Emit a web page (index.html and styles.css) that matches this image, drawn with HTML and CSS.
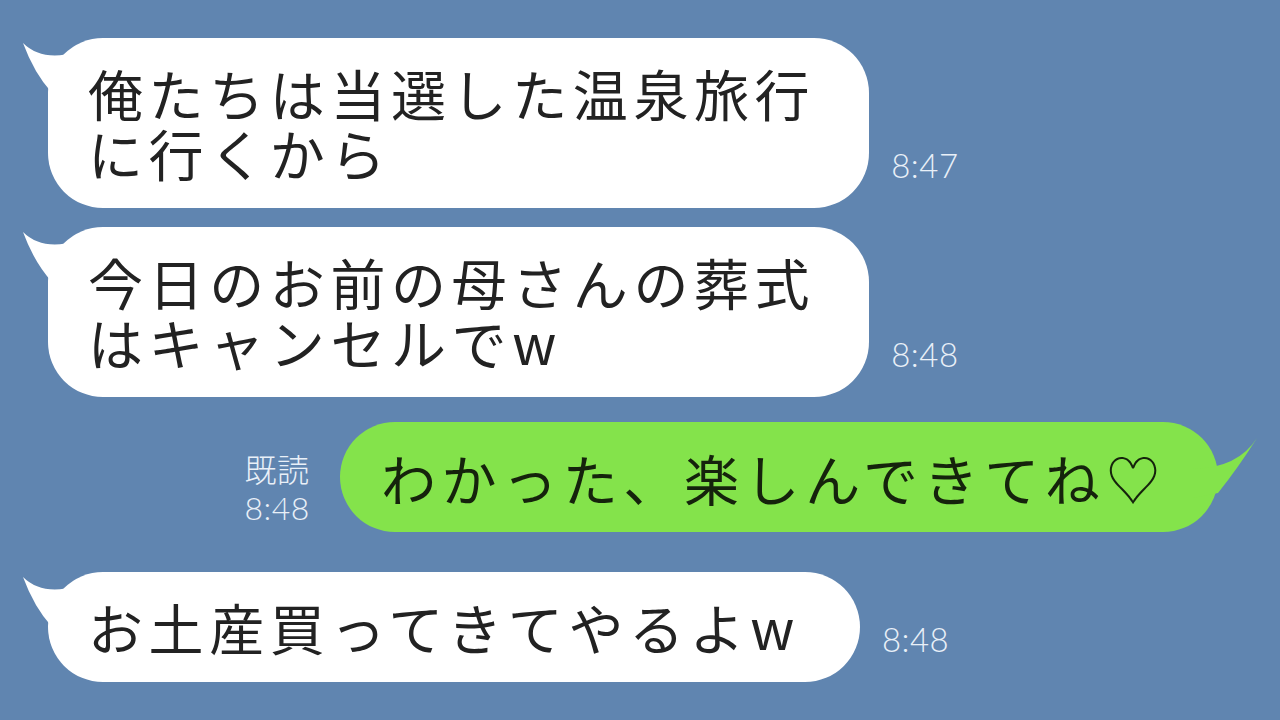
FILE: index.html
```html
<!DOCTYPE html>
<html lang="ja">
<head>
    <meta charset="UTF-8">
    <meta name="viewport" content="width=device-width, initial-scale=1.0">
    <title>トーク</title>
    <link rel="stylesheet" href="styles.css">
</head>
<body>
    <div class="chat">
        <div class="row left first">
            <div class="bubble">
                <svg class="tail" width="70" height="70" viewBox="0 0 70 70"><path d="M1 5 Q20 24 55 14 L60 60 L30 55 Q12 35 1 5 Z"/></svg>
                <p>俺たちは当選した温泉旅行<br>に行くから</p>
            </div>
            <span class="time">8:47</span>
        </div>

        <div class="row left second">
            <div class="bubble">
                <svg class="tail" width="70" height="70" viewBox="0 0 70 70"><path d="M1 5 Q20 24 55 14 L60 60 L30 55 Q12 35 1 5 Z"/></svg>
                <p>今日のお前の母さんの葬式<br>はキャンセルでw</p>
            </div>
            <span class="time">8:48</span>
        </div>

        <div class="row right third">
            <div class="read">
                <span class="read-label">既読</span>
                <span>8:48</span>
            </div>
            <div class="bubble green">
                <svg class="tail" width="70" height="70" viewBox="0 0 70 70"><path d="M69 0 Q50 30 5 31 L5 60 L30 55 Q50 30 69 0 Z"/></svg>
                <p>わかった、楽しんできてね♡</p>
            </div>
        </div>

        <div class="row left fourth">
            <div class="bubble">
                <svg class="tail" width="70" height="70" viewBox="0 0 70 70"><path d="M1 5 Q20 24 55 14 L60 60 L30 55 Q12 35 1 5 Z"/></svg>
                <p>お土産買ってきてやるよw</p>
            </div>
            <span class="time">8:48</span>
        </div>
    </div>
</body>
</html>
```

FILE: styles.css
```css
body {
    margin: 0;
    background-color: #6085b0;
    font-family: "Noto Sans CJK JP", "Noto Sans", sans-serif;
    width: 1280px;
    height: 720px;
    overflow: hidden;
}
.chat {
    display: flex;
    flex-direction: column;
    padding-top: 38px;
}
.row {
    display: flex;
    align-items: flex-end;
}
.row.left {
    padding-left: 48px;
    gap: 22px;
}
.row.right {
    justify-content: flex-end;
    padding-right: 62px;
    gap: 30px;
}
.second {
    margin-top: 19px;
}
.third {
    margin-top: 25px;
}
.fourth {
    margin-top: 40px;
}
.bubble {
    position: relative;
    background-color: #fff;
    border-radius: 55px;
    padding: 24px 54px 26px 40px;
}
.fourth .bubble {
    padding-right: 60px;
}
.bubble p {
    position: relative;
    margin: 0;
    font-size: 55px;
    line-height: 60px;
    letter-spacing: 5.6px;
    color: #222;
    white-space: nowrap;
}
.tail {
    position: absolute;
    left: -26px;
    top: 0;
    fill: #fff;
}
.bubble.green {
    background-color: #84e34b;
    padding: 25px 52px 25px 41px;
}
.bubble.green p {
    color: #15230c;
}
.bubble.green .tail {
    left: auto;
    right: -40px;
    top: 16px;
    fill: #84e34b;
}
.time {
    font-family: "Lato", "Noto Sans", sans-serif;
    font-size: 33px;
    line-height: 34px;
    font-weight: 300;
    color: #e9f0f8;
    margin-bottom: 26px;
    letter-spacing: 0.5px;
}
.read {
    display: flex;
    flex-direction: column;
    font-family: "Lato", "Noto Sans CJK JP", sans-serif;
    font-size: 32px;
    line-height: 40px;
    font-weight: 300;
    color: #e9f0f8;
    margin-bottom: 4px;
    letter-spacing: 0.5px;
}
.read-label {
    font-family: "Noto Sans CJK JP", sans-serif;
    font-size: 32px;
}
```
